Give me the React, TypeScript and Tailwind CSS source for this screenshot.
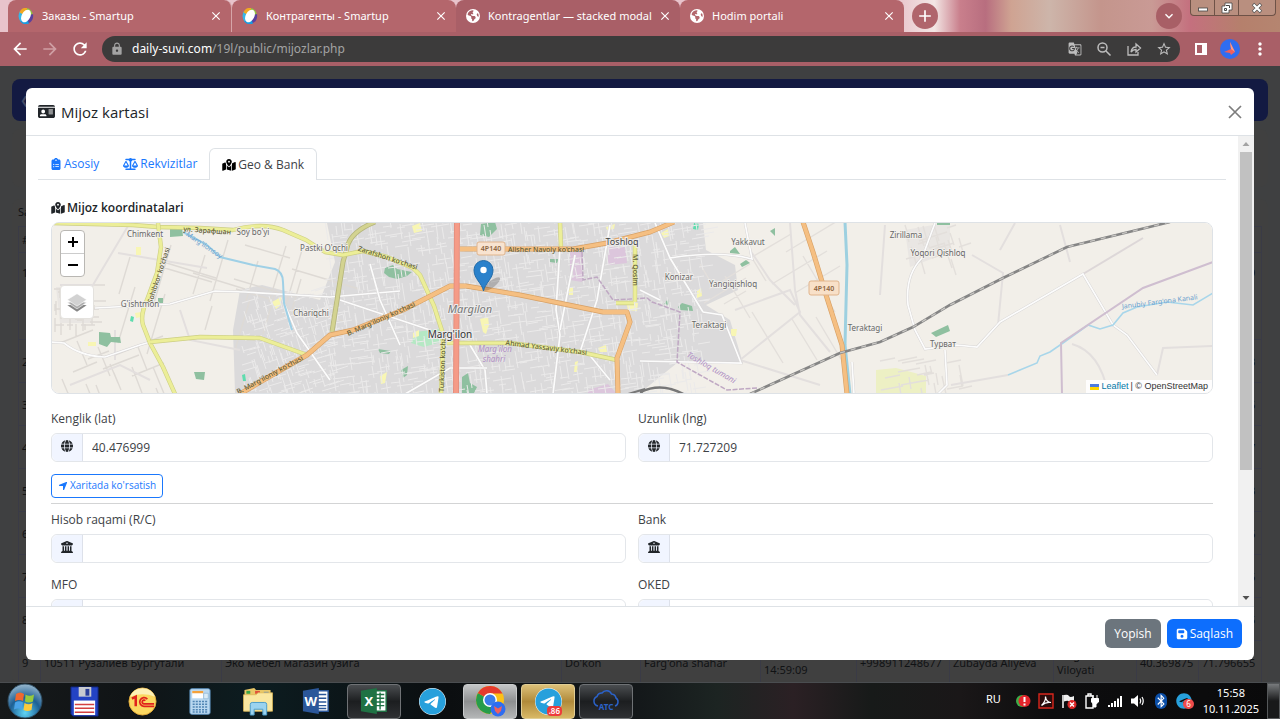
import React, { useId, useState } from "react";
import {
  FaBuildingColumns,
  FaClipboardList,
  FaFloppyDisk,
  FaGlobe,
  FaIdCard,
  FaLocationArrow,
  FaMapLocationDot,
  FaScaleBalanced,
  FaEarthAmericas,
  FaBluetoothB,
  FaTelegram,
} from "react-icons/fa6";
import {
  MdArrowBack,
  MdArrowForward,
  MdClose,
  MdGTranslate,
  MdLock,
  MdMoreVert,
  MdRefresh,
  MdStarBorder,
  MdAdd,
  MdKeyboardArrowDown,
} from "react-icons/md";

/* ---------- Browser window ---------- */

function SmartupIcon() {
  return (
    <svg viewBox="0 0 16 16" className="size-4 shrink-0" aria-hidden="true">
      <path d="M8 0a7 8 0 0 1 7 7L8 8z" fill="#8cc63f" />
      <path d="M15 6a7 8 0 0 1-5 9.600L8 8z" fill="#5b3f9e" />
      <path d="M11 15.500A7 8 0 0 1 2 13L8 8z" fill="#1b9ce0" />
      <path d="M2.500 13.500A7 8 0 0 1 2 3l6 5z" fill="#35b6e8" />
      <path d="M1.500 4.500A7 8 0 0 1 9 0L8 8z" fill="#f2a922" />
      <ellipse cx="8" cy="8" rx="4.300" ry="6.800" transform="rotate(28 8 8)" fill="#fff" />
    </svg>
  );
}

const browserTabs = [
  { title: "Заказы - Smartup", icon: "smartup", active: false },
  { title: "Контрагенты - Smartup", icon: "smartup", active: false },
  { title: "Kontragentlar — stacked modal (", icon: "globe", active: true },
  { title: "Hodim portali", icon: "globe", active: false },
];

function TabStrip() {
  return (
    <div className="flex h-8 shrink-0 items-stretch bg-[linear-gradient(90deg,#e8c3cb_0%,#e8c3cb_70%,#f3e6e4_73%,#c97f8c_75%,#b86e7f_77%,#cfa392_79%,#cdb5aa_82%,#c4958c_86%,#c99a95_90%,#c4707e_93%,#b5806c_97%,#b58570_100%)] pl-2">
      {browserTabs.map((tab, i) => (
        <div
          key={tab.title}
          className={`flex w-56 min-w-0 items-center gap-2 rounded-t-lg pr-2 pl-2.5 text-white ${
            tab.active ? "bg-[#a95f67]" : "bg-[#b4666c]"
          } ${i === 0 ? "border-r border-[#d6a5a8]" : ""}`}
        >
          {tab.icon === "smartup" ? <SmartupIcon /> : <FaEarthAmericas className="size-3.5 shrink-0" />}
          <span className="min-w-0 flex-1 overflow-hidden text-[11px] whitespace-nowrap">{tab.title}</span>
          <button aria-label="Закрыть вкладку" className="-ml-1 shrink-0">
            <MdClose className="size-3.5" />
          </button>
        </div>
      ))}
      <button aria-label="Новая вкладка" className="ml-2 grid size-[26px] place-items-center self-center rounded-full bg-[#b0656c] text-white">
        <MdAdd className="size-5" />
      </button>
      <button aria-label="Поиск вкладок" className="mr-2 ml-auto grid size-[26px] place-items-center self-center rounded-full bg-[#a85f66] text-white">
        <MdKeyboardArrowDown className="size-4" />
      </button>
      <div className="mr-1 flex h-4 self-start rounded-b border border-t-0 border-[#6e5247] bg-[#b98f7f] text-white">
        <button aria-label="Свернуть" className="grid w-6 place-items-center border-r border-[#6e5247]">
          <svg viewBox="0 0 12 12" className="size-3"><rect x="1.500" y="6" width="9" height="3" fill="#fff" stroke="#444" strokeWidth=".8" /></svg>
        </button>
        <button aria-label="Восстановить" className="grid w-6 place-items-center border-r border-[#6e5247]">
          <svg viewBox="0 0 12 12" className="size-3"><path d="M4 1h7v7H8v3H1V4h3z" fill="#fff" stroke="#444" strokeWidth=".8" /><path d="M3.500 6.500h2v2h-2zM5 3.500h3.500V6" fill="none" stroke="#444" /></svg>
        </button>
        <button aria-label="Закрыть" className="grid w-9 place-items-center">
          <svg viewBox="0 0 12 12" className="size-3"><path d="M2 2l8 8M10 2l-8 8" stroke="#555" strokeWidth="3.400" /><path d="M2.500 2.500l7 7M9.500 2.500l-7 7" stroke="#fff" strokeWidth="2.200" /></svg>
        </button>
      </div>
    </div>
  );
}

function AddressBar() {
  return (
    <div className="flex h-[34px] shrink-0 items-center bg-[#a95f67] px-2.5 text-white">
      <button aria-label="Назад"><MdArrowBack className="size-5" /></button>
      <button aria-label="Вперёд" className="ml-2.5 text-[#cf9fa4]"><MdArrowForward className="size-5" /></button>
      <button aria-label="Обновить" className="ml-2.5"><MdRefresh className="size-5" /></button>
      <div className="ml-3 flex h-[26px] min-w-0 flex-1 items-center rounded-full bg-[#3c3b3b] px-2 text-[#a3a3a3]">
        <MdLock className="size-3.5" />
        <div className="ml-2 min-w-0 flex-1 truncate text-xs">
          <span className="text-white">daily-suvi.com</span>/19l/public/mijozlar.php
        </div>
        <div className="flex items-center gap-3.5 text-[#bdbdbd]">
          <button aria-label="Перевести"><MdGTranslate className="size-3.5" /></button>
          <button aria-label="Масштаб">
            <svg viewBox="0 0 16 16" className="size-4" fill="none" stroke="currentColor" strokeWidth="1.500"><circle cx="6.500" cy="6.500" r="4.500" /><path d="M10 10l4.500 4.500M4.500 6.500h4" /></svg>
          </button>
          <button aria-label="Поделиться">
            <svg viewBox="0 0 16 16" className="size-4" fill="none" stroke="currentColor" strokeWidth="1.300"><path d="M2 5v9h10v-3M5 11c.5-3.500 2-5 5-5V3l4.500 4L10 11V8.500C8 8.500 6.500 9 5 11z" /></svg>
          </button>
          <button aria-label="В закладки"><MdStarBorder className="size-4" /></button>
        </div>
      </div>
      <button aria-label="Боковая панель" className="ml-3.5">
        <svg viewBox="0 0 14 14" className="size-3.5"><path d="M1 1h12v12H1z" fill="#fff" /><path d="M3 3h5v8H3z" fill="#a95f67" /></svg>
      </button>
      <button aria-label="Профиль" className="ml-3">
        <svg viewBox="0 0 20 20" className="size-5"><circle cx="10" cy="10" r="10" fill="#2f6df0" /><path d="M10 3l1 7-7 3 6 1 1 2 4-3z" fill="#f0605c" /><path d="M10 3l1 7 4 3z" fill="#ff9a86" /></svg>
      </button>
      <button aria-label="Меню" className="ml-2.5"><MdMoreVert className="size-5" /></button>
    </div>
  );
}

/* ---------- Customer list behind the dialog ---------- */

const rows = [
  { n: 1, lng: "71.784219" },
  { n: 2, lng: "71.784213" },
  { n: 3, lng: "71.784216" },
  { n: 4, lng: "71.784217" },
  { n: 5, lng: "71.784213" },
  { n: 6, lng: "71.784216" },
  { n: 7, lng: "71.784216" },
  { n: 8, lng: "71.784215" },
];

function CustomerList() {
  return (
    <div aria-hidden="true" className="h-full overflow-hidden bg-[#3f4041] px-3 pt-[13px] text-[11px] text-[#101214]">
      <div className="flex h-[42px] items-center rounded-lg bg-[#131a42] px-2 text-[#444a66]">❮</div>
      <div className="mt-2 h-[58px] rounded-lg bg-[#404040]" />
      <div className="mt-3 rounded-lg bg-[#404040] px-1.5">
        <p className="flex h-[27px] items-center">Sa</p>
        <table className="w-full table-fixed border-collapse [&_td]:border [&_td]:border-[#3a3b46] [&_td]:px-[3px] [&_td]:leading-[15px]">
          <colgroup>
            <col className="w-[22px]" />
            <col className="w-[181px]" />
            <col />
            <col className="w-[79px]" />
            <col className="w-[120px]" />
            <col className="w-[96px]" />
            <col className="w-[93px]" />
            <col className="w-[104px]" />
            <col className="w-[83px]" />
            <col className="w-[62px]" />
            <col className="w-[63px]" />
          </colgroup>
          <tbody>
            <tr className="h-[26px]">
              <td>#</td>
              {Array.from({ length: 10 }, (_, i) => <td key={i} />)}
            </tr>
            {rows.map((r) => (
              <tr key={r.n} className={r.n === 1 ? "h-[87px] align-top [&_td]:pt-3" : "h-[43px]"}>
                <td>{r.n}</td>
                {Array.from({ length: 9 }, (_, i) => <td key={i} />)}
                <td>{r.lng}</td>
              </tr>
            ))}
            <tr className="h-[43px] whitespace-nowrap">
              <td>9</td>
              <td>10511 Рузалиев Бургутали</td>
              <td>Эко мебел магазин узига</td>
              <td>Do'kon</td>
              <td>Farg'ona shahar</td>
              <td>2025-11-10<br />14:59:09</td>
              <td>+998911248677</td>
              <td>Zubayda Aliyeva</td>
              <td>Farg'ona<br />Viloyati</td>
              <td>40.369875</td>
              <td>71.796655</td>
            </tr>
          </tbody>
        </table>
      </div>
    </div>
  );
}

/* ---------- Map ---------- */

function makeRandom(seed: number) {
  let s = seed;
  return () => {
    s = (s * 16807) % 2147483647;
    return s / 2147483647;
  };
}

/* Minor streets: a loose lattice of short segments inside a box. */
function streets(seed: number, x0: number, y0: number, x1: number, y1: number, step: number, tilt: number) {
  const rnd = makeRandom(seed);
  let d = "";
  for (let x = x0; x < x1; x += step) {
    for (let y = y0; y < y1; y += step) {
      const px = Math.round(x + rnd() * step);
      const py = Math.round(y + rnd() * step);
      const len = Math.round(step * (0.8 + rnd() * 1.6));
      const slope = Math.round(len * tilt);
      d += rnd() > 0.45 ? `M${px} ${py}l${slope} ${len}` : `M${px} ${py}l${len} ${-slope}`;
    }
  }
  return d;
}

const cityStreets = streets(41, 325, 218, 700, 392, 8, 0.15) + streets(77, 242, 290, 330, 392, 7, 0.3);
const villageStreets =
  streets(5, 54, 285, 92, 325, 6, 0.02) + streets(9, 60, 340, 150, 390, 16, 0.4) + streets(15, 130, 230, 300, 300, 28, -0.3);
const eastStreets = streets(23, 905, 225, 955, 260, 9, 0.3) + streets(31, 880, 360, 960, 390, 10, 0.2) + streets(12, 700, 250, 800, 300, 24, 0.6);

const YELLOW = [
  "M51 223L133 225L158 227L200 228L233 230Q262 222 283 230L306 240L325 252L343 255L363 251L387 257L413 268L420 275L434 306L443 334L443 343L441 394",
  "M158 223L161 247L157 273L147 300Q140 315 143 325L150 343L163 367L175 394",
  "M150 342Q160 341 200 337L260 338L307 355",
  "M447 343L510 343L580 352L617 360",
  "M560 222L561 248",
  "M635 240L635 302M616 303L634 303",
];
const OLIVE = ["M375 222Q350 232 347 248L343 262L332 332"];
const ORANGE = [
  "M240 394L267 378L307 355L330 335L353 330L403 310L450 286L466 286L520 295L603 312L627 312L630 322L617 358L618 394",
  "M460 249L573 249L607 243L650 232L674 222",
  "M803 222L813 252L827 298L842 345L847 394",
];
const WHITE = [
  "M95 308L170 304L215 291L245 292L330 297L400 291M51 342L64 343Q80 356 105 357L140 345L150 342",
  "M284 303L297 333L330 380M655 223L670 258L703 312M670 258Q720 250 752 259L745 223M703 312L722 315L730 335L741 363L640 361",
  "M560 248L556 310L560 335L553 394M610 225L597 300L580 352M470 345L485 370L487 394",
  "M575 255L560 330M587 352L610 380",
  "M935 223L922 258Q905 275 908 305L915 330L925 349L957 345L977 347L1000 322L1083 274L1113 325L1127 335L1157 375",
  "M660 300L640 290M945 350L947 385L938 394M852 362L854 394M405 394L450 368L487 368M370 264L380 300L400 345M340 300L430 330",
];
const RAIL = "M750 394L840 353L880 342L913 327L950 305L1003 278L1067 247L1170 222";

const PLACES: { t: string; x: number; y: number }[] = [
  { t: "Chimkent", x: 145, y: 237 },
  { t: "Soy bo'yi", x: 253, y: 235 },
  { t: "Pastki O'qchi", x: 324, y: 251 },
  { t: "G'ishtmon", x: 140, y: 307 },
  { t: "Chariqchi", x: 311, y: 316 },
  { t: "Yakkavut", x: 748, y: 245 },
  { t: "Konizar", x: 679, y: 280 },
  { t: "Yangiqishloq", x: 733, y: 287 },
  { t: "Teraktagi", x: 709, y: 328 },
  { t: "Teraktagi", x: 865, y: 331 },
  { t: "Zirillama", x: 906, y: 238 },
  { t: "Yoqori Qishloq", x: 938, y: 256 },
  { t: "Турват", x: 943, y: 347 },
];

const GREENS = [
  "M170 228l12-1 1 9-13 1z", "M99 332l11 1 1 4 9 0 1 6-10-1-4 5-8-3z", "M194 372h11l-1 8-8-1z", "M158 298h5v5h-5z",
  "M481 224l14-2 2 7-8 8-9-2z", "M385 268l8-3 4 4 15 3-5 4-10 3-8-2-5-4z", "M378 349l13 2-2 3-9-1z",
  "M401 370l7-4-1 9-4 3z", "M462 377l6-4 2 10 7 4-3 6h-12z", "M550 259l9 0-2 4-7-1z", "M730 251l5-4 5 7-10-1z", "M740 264l6-4 4 3-8 4z",
  "M678 307l4-4 10 3 1 5-13-1z", "M931 333l17-8 2 6-14 6z", "M770 231l5-3 0 8z", "M664 304l4-5 1 6z", "M937 222h13v3h-13z",
];
const LIGHT_YELLOWS = [
  "M412 226l8-3 2 8-8 2z", "M480 319l8-2 1 8-3 9-3-2z", "M380 376l7-4-2 11-4 1z", "M598 348l8-3 1 7-7 0z", "M606 227l9-3-1 5-7 1z",
  "M661 233l7-4 1 7-5 2z", "M697 291l4-3 1 8-5 2z", "M731 329l6 0-1 7-5 0z", "M272 302l9-5 0 8-5 4z", "M136 247h5v8h-5z", "M88 342h8v4h-8z",
  "M575 362l3-1-1 11-3 0z", "M525 294l10 1v4l-9-1z", "M569 287h4v8h-4z", "M135 313l6-1 0 5-5 1z", "M413 333l6-3 0 6-6 2z", "M626 301l12 2-1 8-9-1z",
];

function MapCanvas() {
  return (
    <svg
      viewBox="51 223 1162 170"
      preserveAspectRatio="xMidYMid slice"
      className="absolute inset-0 size-full font-['Noto_Sans',sans-serif]"
      role="img"
      aria-label="Xarita"
    >
      <rect x="0" y="150" width="1300" height="300" fill="#f2efe9" />
      <path d="M327 223H703L706 250L735 265L738 290L706 305L730 320L743 363H677L640 393H235L233 330L240 290L262 285L320 300L335 262Z" fill="#dbdadb" />
      <path d="M56 287h35v36H60zM905 230l45-8 0 30-40 15z" fill="#e9e6e3" />
      <path d="M876 370l20-2 30 8 0 17h-50z" fill="#edf0c4" />
      <path d="M570 252h12l0 30-12-2zM608 247l17 0 2 16-19 2zM588 390l20-6 8 9h-28z" fill="#dcc6dc" />
      <path d="M415 332l24-3 5 12-20 6-13-4z" fill="#b5e8c4" />
      <path d={villageStreets} stroke="#dedad5" strokeWidth="1.400" fill="none" />
      <path d={eastStreets} stroke="#e3dfdb" strokeWidth="1.400" fill="none" />
      <path d="M90 290L128 226M118 253L207 268M60 285H92M70 385L120 365L150 380M115 330V360M180 310L190 340L240 350M790 223L795 290L800 315L830 352M735 310L790 290L800 312L740 360L820 385M880 295L885 225M972 255L1003 273L998 325M1060 225L1070 262M1000 250L1015 223M1072 344Q1100 352 1108 393M1157 375L1163 348L1213 346M951 385L1008 375M750 250L770 280L795 305" stroke="#e3dfde" strokeWidth="2" fill="none" />
      <path d="M1083 274L1143 238" stroke="#ddd7d8" strokeWidth="2" fill="none" />
      {LIGHT_YELLOWS.map((d) => <path key={d} d={d} fill="#f8f6b4" />)}
      {GREENS.map((d) => <path key={d} d={d} fill="#8fc0a0" />)}
      <path d="M131 316l3 1-1 5-3-1zM694 223l5 1-1 6-5-1zM242 375l3-1 1 7-3 0z" fill="#5fdcae" />
      <path d={cityStreets} stroke="#ebeaea" strokeWidth="1" fill="none" />
      {WHITE.map((d) => (
        <g key={d} fill="none">
          <path d={d} stroke="#d6d4d4" strokeWidth="2.600" />
          <path d={d} stroke="#fcfcfc" strokeWidth="1.700" />
        </g>
      ))}
      <path d="M183 232L207 245L220 257L253 265L275 269Q283 272 283 282L284 303L292 330" stroke="#9fd0e6" strokeWidth="2" fill="none" />
      <path d="M845 222L847 265L845 345L850 394" stroke="#9dd0e0" strokeWidth="3" fill="none" />
      <path d="M1008 375L1037 363L1040 356L1050 352L1063 343L1088 325L1100 329L1113 325L1123 313L1137 307L1167 302L1193 305L1213 293" stroke="#a8d6ea" strokeWidth="1.600" fill="none" />
      <path d="M582 252L583 280L597 277L613 300L647 298L652 302L680 312L677 362L700 375L727 390L757 388" stroke="#bfa8c3" strokeWidth="1.500" strokeDasharray="5 1.500" fill="none" />
      <path d="M1062 394L1061 343L1143 288L1213 262" stroke="#cfbed0" strokeWidth="2" fill="none" />
      {OLIVE.map((d) => (
        <g key={d} fill="none" strokeLinejoin="round">
          <path d={d} stroke="#b5b57c" strokeWidth="5" />
          <path d={d} stroke="#d3d391" strokeWidth="3.400" />
        </g>
      ))}
      {YELLOW.map((d) => (
        <g key={d} fill="none" strokeLinejoin="round">
          <path d={d} stroke="#cdcf84" strokeWidth="4.400" />
          <path d={d} stroke="#ecee98" strokeWidth="3.200" />
        </g>
      ))}
      {ORANGE.map((d) => (
        <g key={d} fill="none" strokeLinejoin="round">
          <path d={d} stroke="#d7a065" strokeWidth="5" />
          <path d={d} stroke="#f5bf82" strokeWidth="3.800" />
        </g>
      ))}
      <path d="M457 222L456 394" stroke="#e58f7f" strokeWidth="6" />
      <path d="M457 222L456 394" stroke="#f59b87" strokeWidth="4" />
      <path d={RAIL} stroke="#858585" strokeWidth="2.600" fill="none" />
      <path d={RAIL} stroke="#c9c7c4" strokeWidth="1.300" strokeDasharray="5 6" fill="none" />
      <path d="M640 392Q662 382 683 394" stroke="#777" strokeWidth="2.600" fill="none" />
      <path d="M628 394L645 389L640 394" stroke="#777" strokeWidth="2" fill="none" />

      <g fontSize="7" fontWeight="500" fill="#5f5d38" textAnchor="middle">
        <text x="207" y="233" transform="rotate(4 207 233)">ул. Зарафшан</text>
        <text x="161" y="276" transform="rotate(-72 161 276)">Sohibkor ko'chasi</text>
        <text x="387" y="260" transform="rotate(18 387 260)">Zarafshon ko'chasi</text>
        <text x="271" y="377" transform="rotate(-28 271 377)">B. Marg'iloniy ko'chasi</text>
        <text x="382" y="321" transform="rotate(-24 382 321)">B. Marg'iloniy ko'chasi</text>
        <text x="508" y="252" textAnchor="start">Alisher Navoiy ko'chasi</text>
        <text x="546" y="350" transform="rotate(7 546 350)">Ahmad Yassaviy ko'chasi</text>
        <text x="445" y="362" transform="rotate(-88 445 362)">Turkiston ko'chasi</text>
        <text x="633" y="270" transform="rotate(90 633 270)">M. Qosim</text>
      </g>
      <g fontSize="7" fill="#6c9fce" textAnchor="middle">
        <text x="203" y="247" transform="rotate(34 203 247)">Marg'ilonsoy</text>
        <text x="1160" y="304" transform="rotate(-7 1160 304)">Janubiy Farg'ona Kanali</text>
      </g>
      <g fontSize="8" fontStyle="italic" fill="#b08fc4" textAnchor="middle">
        <text x="495" y="352">Marg'ilon</text>
        <text x="494" y="362">shahri</text>
        <text x="710" y="370" transform="rotate(30 710 370)">Toshloq tumani</text>
      </g>
      <g fontSize="8" fill="#666" stroke="#f4f2ee" strokeWidth="1.600" paintOrder="stroke" textAnchor="middle">
        {PLACES.map((p) => <text key={p.t + p.x} x={p.x} y={p.y}>{p.t}</text>)}
      </g>
      <g stroke="#ececec" strokeWidth="2" paintOrder="stroke" textAnchor="middle">
        <text x="622" y="245" fontSize="9" fill="#444">Toshloq</text>
        <text x="470" y="313" fontSize="11" fontStyle="italic" fill="#777">Margilon</text>
        <text x="450" y="338" fontSize="10" fill="#333">Marg'ilon</text>
      </g>
      <g fontSize="7" fontWeight="600" fill="#8a6340" textAnchor="middle">
        <rect x="477" y="242" width="28" height="13" rx="2" fill="#f8e3d0" stroke="#e0b48c" />
        <text x="491" y="251">4P140</text>
        <rect x="809" y="281" width="30" height="14" rx="2" fill="#f8e0c8" stroke="#e0b48c" />
        <text x="824" y="291">4P140</text>
      </g>

      <ellipse cx="492" cy="284" rx="10" ry="3.500" transform="rotate(-38 492 284)" fill="#000" opacity=".2" />
      <path d="M483.500 291C482 283 474 279 474 270a9.500 9.500 0 0 1 19 0c0 9-8 13-9.500 21z" fill="#2a81cb" stroke="#226ba8" />
      <circle cx="483.500" cy="270" r="3.200" fill="#fff" />
    </svg>
  );
}

function CustomerMap() {
  return (
    <div className="relative h-[172px] overflow-hidden rounded-lg border border-[#dee2e6]">
      <MapCanvas />
      <div className="absolute top-[7px] left-2 flex flex-col gap-2">
        <div className="flex w-[25px] flex-col rounded-sm border border-[#b9b7b3] bg-white text-black">
          <button aria-label="Yaqinlashtirish" className="grid h-[23px] place-items-center border-b border-[#ccc]">
            <svg viewBox="0 0 10 10" className="size-2.5"><path d="M5 0v10M0 5h10" stroke="#000" strokeWidth="2" /></svg>
          </button>
          <button aria-label="Uzoqlashtirish" className="grid h-[22px] place-items-center">
            <svg viewBox="0 0 10 10" className="size-2.5"><path d="M0 5h10" stroke="#000" strokeWidth="2" /></svg>
          </button>
        </div>
        <button aria-label="Qatlamlar" className="grid size-[34px] place-items-center rounded border border-[#e4e2de] bg-white">
          <svg viewBox="0 0 26 26" className="size-6">
            <path d="M13 15.500L2.500 16.500 13 23.500l10.500-7z" fill="#868686" />
            <path d="M13 12L2.500 13.500 13 20.500l10.500-7z" fill="#adadad" stroke="#fff" strokeWidth=".6" />
            <path d="M13 4L2.500 10.500 13 17.500l10.500-7z" fill="#d2d2d2" stroke="#fff" strokeWidth=".6" />
          </svg>
        </button>
      </div>
      <div className="absolute right-0 bottom-0 flex items-center bg-white/90 px-1 font-['Liberation_Sans',sans-serif] text-[9px] leading-[13px] text-[#333]">
        <svg viewBox="0 0 9 6" className="mr-0.5 h-1.5 w-[9px]"><path d="M0 0h9v3H0z" fill="#4C7BE1" /><path d="M0 3h9v3H0z" fill="#FFD500" /></svg>
        <a href="#leaflet" className="mr-0.5 text-[#0078a8]">Leaflet</a>| © OpenStreetMap
      </div>
    </div>
  );
}

/* ---------- Dialog ---------- */

function Field({ label, icon, value = "" }: { label: string; icon: React.ReactNode; value?: string }) {
  const id = useId();
  const [text, setText] = useState(value);
  return (
    <div className="min-w-0">
      <label htmlFor={id} className="mb-1.5 block leading-4">{label}</label>
      <div className="flex h-[29px] rounded-md border border-[#e3e6ea]">
        <span className="flex w-[31px] items-center justify-center rounded-l-md border-r border-[#dde1ea] bg-[#f1f5ff] pb-1 text-[#212529]">{icon}</span>
        <input id={id} value={text} onChange={(e) => setText(e.target.value)} className="min-w-0 flex-1 rounded-r-md bg-white px-[9px] outline-none" />
      </div>
    </div>
  );
}

function DialogScrollbar() {
  return (
    <div aria-hidden="true" className="flex w-4 shrink-0 flex-col items-center bg-[#f1f1f1]">
      <svg viewBox="0 0 16 16" className="size-4"><path d="M4.500 10h7L8 6z" fill="#a3a3a3" /></svg>
      <div className="w-3 flex-[319] bg-[#c1c1c1]" />
      <div className="flex-[120]" />
      <svg viewBox="0 0 16 16" className="size-4"><path d="M4.500 6h7L8 10z" fill="#505050" /></svg>
    </div>
  );
}

const faIcon = "size-3 shrink-0";

function CustomerDialog() {
  return (
    <section role="dialog" aria-modal="true" aria-labelledby="dialog-title" className="flex h-full flex-col overflow-hidden rounded-md bg-white font-['Open_Sans','Noto_Sans',sans-serif] text-xs text-[#3d4246]">
      <header className="flex h-12 shrink-0 items-center justify-between border-b border-[#dee2e6] px-3">
        <h1 id="dialog-title" className="flex items-center gap-1.5 text-[15px] text-[#212529]">
          <FaIdCard className="size-[17px]" />
          Mijoz kartasi
        </h1>
        <button aria-label="Yopish" className="text-[#7d7d7d]">
          <svg viewBox="0 0 14 14" className="size-3.5"><path d="M1 1l12 12M13 1L1 13" stroke="currentColor" strokeWidth="1.700" /></svg>
        </button>
      </header>

      <div className="flex min-h-0 flex-1">
        <div className="min-w-0 flex-1 overflow-hidden px-3 pt-3">
          <div role="tablist" className="flex h-8 border-b border-[#dee2e6] text-[#1a78fd]">
            <button role="tab" className="flex items-center gap-0.5 px-3 pt-px"><FaClipboardList className={faIcon} />Asosiy</button>
            <button role="tab" className="flex items-center gap-0.5 px-3 pt-px"><FaScaleBalanced className="h-3 w-[15px] shrink-0" />Rekvizitlar</button>
            <button role="tab" aria-selected="true" className="-mb-px flex items-center gap-0.5 rounded-t-md border border-b-0 border-[#dee2e6] bg-white px-3 text-[#3d4246]">
              <FaMapLocationDot className="h-3 w-3.5 shrink-0 text-black" />Geo &amp; Bank
            </button>
          </div>

          <div className="px-[13px] pt-[19px]">
            <h2 className="mb-1.5 flex items-center gap-0.5 leading-[17px] font-semibold text-[#212529]"><FaMapLocationDot className="h-3 w-3.5 shrink-0" />Mijoz koordinatalari</h2>
            <CustomerMap />
            <div className="mt-[17px] grid grid-cols-2 gap-x-3">
              <Field label="Kenglik (lat)" icon={<FaGlobe className={faIcon} />} value="40.476999" />
              <Field label="Uzunlik (lng)" icon={<FaGlobe className={faIcon} />} value="71.727209" />
            </div>
            <button className="mt-3 flex h-6 items-center gap-0.5 rounded border border-[#1a78fd] px-1.5 text-[10px] text-[#1a78fd]">
              <FaLocationArrow className="size-2.5" />Xaritada ko'rsatish
            </button>
            <hr className="mt-[5px] border-[#d3d4d5]" />
            <div className="mt-2 grid grid-cols-2 gap-x-3 gap-y-3.5">
              <Field label="Hisob raqami (R/C)" icon={<FaBuildingColumns className={faIcon} />} />
              <Field label="Bank" icon={<FaBuildingColumns className={faIcon} />} />
              <Field label="MFO" icon={<FaBuildingColumns className={faIcon} />} />
              <Field label="OKED" icon={<FaBuildingColumns className={faIcon} />} />
            </div>
          </div>
        </div>
        <DialogScrollbar />
      </div>

      <footer className="flex h-[54px] shrink-0 items-center justify-end gap-1.5 border-t border-[#dee2e6] px-3 text-white">
        <button className="h-[29px] rounded-md bg-[#6c757d] px-[9px]">Yopish</button>
        <button className="flex h-[29px] items-center gap-0.5 rounded-md bg-[#0d6efd] px-[9px]"><FaFloppyDisk className={faIcon} />Saqlash</button>
      </footer>
    </section>
  );
}

/* ---------- Taskbar ---------- */

const StartOrb = () => (
  <svg viewBox="0 0 36 36" className="size-9">
    <defs><radialGradient id="orb" cx=".5" cy=".85" r=".9"><stop offset="0" stopColor="#5fd4f5" /><stop offset=".5" stopColor="#1d5f94" /><stop offset="1" stopColor="#a9c4d6" /></radialGradient></defs>
    <circle cx="18" cy="18" r="17" fill="url(#orb)" stroke="#2c4b60" />
    <path d="M9 11q4-3 8 0l-1 7q-4-2-8 0z" fill="#f0682f" /><path d="M18.500 11.500q4 2.500 8.500 0l-1 7q-4 2-8 0z" fill="#96c93e" />
    <path d="M8 19.500q4-2.500 8 0l-1 7q-4-2-8 0z" fill="#4aa3e8" /><path d="M17.500 20q4 2.500 8 0l-1 7q-4 2-8 0z" fill="#fccb3c" />
  </svg>
);
const FloppyApp = () => (
  <svg viewBox="0 0 32 32" className="size-[31px]"><path d="M2 1h28v30H4l-2-2z" fill="#2343c4" stroke="#0f2680" /><path d="M10 1h13v10H10z" fill="#c8cbd0" /><path d="M17 3h4v7h-4z" fill="#2a3f9a" /><path d="M5 15h22v15H5z" fill="#fff" /><path d="M6 19h20M6 23h20M6 27h20" stroke="#d34040" strokeWidth="1.500" /></svg>
);
const OneCApp = () => (
  <svg viewBox="0 0 30 30" className="size-[29px]"><circle cx="15" cy="15" r="14" fill="#fbd861" stroke="#e0a93a" /><path d="M2 10a14 14 0 0 1 26 0q-13-5-26 0z" fill="#fdf0b5" /><path d="M4 12l4-2v10" fill="none" stroke="#e0221c" strokeWidth="2.600" /><path d="M20 12.500a4.500 4.500 0 1 0-3.500 7.500H27M18 14a2 2 0 1 0-1.500 3.500H27" fill="none" stroke="#e0221c" strokeWidth="1.800" /></svg>
);
const CalcApp = () => (
  <svg viewBox="0 0 24 30" className="h-[29px] w-[22px]"><rect x="1" y="1" width="22" height="28" rx="2" fill="#b9d8f0" stroke="#5a8fbd" /><path d="M3.500 3.500h12v8h-12z" fill="#fff" /><path d="M3.500 3.500h12v2.500h-12z" fill="#f3a13b" /><path d="M16 6h5v6h-5z" fill="#d9ecf8" stroke="#7ba7c9" strokeWidth=".6" /><path d="M4 15h16M4 18h16M4 21h16M4 24h16M4 26.500h16" stroke="#4f84b3" strokeWidth="1.800" strokeDasharray="2.200 1.200" /></svg>
);
const ExplorerApp = () => (
  <svg viewBox="0 0 32 30" className="h-[29px] w-8"><path d="M2 3l10-2 2 2h15v22H2z" fill="#e9c767" /><path d="M4 4h4v3H4z" fill="#3aa546" /><path d="M13 4h5v3h-5z" fill="#e1503a" /><path d="M22 5h5v2h-5z" fill="#4b87d0" /><path d="M1 8h13l2-2h15v19H1z" fill="#fae7a0" stroke="#d9b553" strokeWidth=".8" /><path d="M8 18q0-2 2-2h13q2 0 2 2v11h-4v-6h-9v6H8z" fill="#9bd3ef" stroke="#4b9cc9" /></svg>
);
const OfficeApp = ({ letter, kind }: { letter: string; kind: "word" | "excel" }) => {
  const color = kind === "word" ? "#2b579a" : "#1f7244";
  return (
    <svg viewBox="0 0 30 30" className="size-7">
      <path d="M15 4h13v22H15z" fill="#fff" stroke={color} strokeWidth="1.500" />
      {kind === "word" ? <path d="M17 8h9M17 12h9M17 16h9M17 20h9M17 23h9" stroke={color} strokeWidth="1.500" /> : <path d="M17 8h9M17 12h9M17 16h9M17 20h9M21.500 6v18" stroke={color} strokeWidth="1.500" />}
      <path d="M1 4l17-3v28L1 26z" fill={color} />
      <text x="9.500" y="20" textAnchor="middle" fontSize="14" fontWeight="700" fill="#fff">{letter}</text>
    </svg>
  );
};
const ChromeApp = () => (
  <svg viewBox="0 0 32 32" className="size-8"><circle cx="16" cy="15" r="14" fill="#fbc116" /><path d="M16 15L3.900 8A14 14 0 0 0 16 29l6-10.500z" fill="#269c4b" /><path d="M16 15L3.900 8A14 14 0 0 1 28.500 8.500H16z" fill="#e53a2e" /><circle cx="16" cy="15" r="7" fill="#fff" /><circle cx="16" cy="15" r="5.500" fill="#3b7de9" /><circle cx="24" cy="24" r="7.500" fill="#2f6df0" /><path d="M20 21l4 2.500 4-2.500-1 5-3 3-3-3z" fill="#f0605c" /></svg>
);
const AtcApp = () => (
  <svg viewBox="0 0 30 28" className="h-7 w-[30px]"><path d="M7 19a5 5 0 0 1-1-9.500A5 5 0 0 1 11 6a5.500 5.500 0 0 1 9.500 1A5 5 0 0 1 25 11a4.500 4.500 0 0 1-1 8" fill="none" stroke="#2b62c9" strokeWidth="1.500" /><text x="15" y="23" textAnchor="middle" fontSize="8" fontWeight="700" fill="#2b62c9">ATC</text></svg>
);
const TelegramApp = () => (
  <span className="grid size-[27px] place-items-center rounded-full bg-white"><FaTelegram className="size-[27px] text-[#27a0dc]" /></span>
);

function TaskButton({ label, look = "plain", children }: { label: string; look?: "plain" | "open" | "lit" | "gold"; children: React.ReactNode }) {
  const looks = {
    plain: "border-transparent",
    open: "border-[#6f7275] bg-[linear-gradient(180deg,#4a4d50,#1c1e20_50%,#2e3033)]",
    lit: "border-[#c9cbcc] bg-[linear-gradient(180deg,#c4c6c7,#8d8f90_50%,#b4b6b7)]",
    gold: "border-[#e0cd94] bg-[linear-gradient(180deg,#dcc078,#b08a3a_50%,#d8b866)]",
  };
  return (
    <button aria-label={label} className={`relative grid h-[35px] w-[54px] place-items-center rounded-sm border ${looks[look]}`}>
      {children}
    </button>
  );
}

function Taskbar() {
  return (
    <nav className="flex h-[37px] shrink-0 items-center border-t border-[#4a4d50] bg-[linear-gradient(90deg,#16191a_0%,#101416_10%,#0c1c20_20%,#0b0e10_35%,#14181a_50%,#1c2422_56%,#2b2024_62%,#171a19_68%,#1a1718_75%,#0d0d0e_82%,#0a0a0b_100%)] text-white">
      <button aria-label="Пуск" className="ml-[7px]"><StartOrb /></button>
      <div className="ml-3.5 flex gap-1">
        <TaskButton label="Total Commander"><FloppyApp /></TaskButton>
        <TaskButton label="1C"><OneCApp /></TaskButton>
        <TaskButton label="Калькулятор"><CalcApp /></TaskButton>
        <TaskButton label="Проводник"><ExplorerApp /></TaskButton>
        <TaskButton label="Word"><OfficeApp letter="W" kind="word" /></TaskButton>
        <TaskButton label="Excel" look="open"><OfficeApp letter="X" kind="excel" /></TaskButton>
        <TaskButton label="Telegram"><TelegramApp /></TaskButton>
        <TaskButton label="Chrome" look="lit"><ChromeApp /></TaskButton>
        <TaskButton label="Telegram" look="gold">
          <TelegramApp />
          <span className="absolute right-3 bottom-0.5 rounded-sm bg-[#ee3b3b] px-0.5 text-[8px] leading-[10px] font-semibold">.86</span>
        </TaskButton>
        <TaskButton label="ATC" look="open"><AtcApp /></TaskButton>
      </div>
      <span className="mr-3.5 mb-1 ml-auto text-[11px]">RU</span>
      <div className="flex items-center gap-[7px]">
        <svg viewBox="0 0 16 16" className="size-4"><circle cx="7" cy="8" r="6" fill="#3fae49" /><circle cx="9.500" cy="8" r="6" fill="#e3242b" /><path d="M9.500 4v5M9.500 10.500v2" stroke="#fff" strokeWidth="2" /></svg>
        <svg viewBox="0 0 16 16" className="size-4"><path d="M1 1h14v14H1z" fill="#2a0c0c" stroke="#d8261c" strokeWidth="1.400" /><path d="M3.500 12.500Q8 8 7.500 3.500 8 9 13 9.500 8 8.500 3.500 12.500z" fill="none" stroke="#fff" strokeWidth="1.200" /></svg>
        <svg viewBox="0 0 16 16" className="size-4"><path d="M2 2v13" stroke="#fff" strokeWidth="1.500" /><path d="M3 2q4-1 5 1t5 0v6q-4 1-5-.5T3 8.500z" fill="#eee" /><circle cx="11" cy="11.500" r="4.500" fill="#dc2626" /><path d="M9 9.500l4 4M13 9.500l-4 4" stroke="#fff" strokeWidth="1.400" /></svg>
        <svg viewBox="0 0 16 16" className="size-4"><path d="M2 3h7v12H2zM4 1h3v2H4z" fill="none" stroke="#fff" strokeWidth="1.400" /><path d="M9 2v4M13 2v4M7.500 5.500h7V9L12 11v3H9.500v-3L7.500 9z" fill="#fff" stroke="#fff" /></svg>
        <svg viewBox="0 0 16 16" className="size-4" fill="#fff"><path d="M1 12h2v2H1zM4 10h2v4H4zM7 8h2v6H7zM10 5.500h2V14h-2zM13 3h2v11h-2z" /></svg>
        <svg viewBox="0 0 16 16" className="size-4"><path d="M1 5.500h3L8 2v12l-4-3.500H1z" fill="#fff" /><path d="M10 5.500q1.500 2.500 0 5M12 4q2.500 4 0 8" fill="none" stroke="#fff" strokeWidth="1.200" /></svg>
        <span className="grid size-4 place-items-center"><FaBluetoothB className="h-4 w-3 rounded-full bg-[#0b4fa8] p-px" /></span>
        <span className="relative"><FaTelegram className="size-4 text-[#27a0dc]" /><span className="absolute -right-0.5 bottom-0 rounded-full bg-[#ee4b4b] px-[3px] text-[8px] leading-[10px]">6</span></span>
      </div>
      <time className="mr-2 ml-[11px] text-center text-[11px] leading-[16px]">15:58<br />10.11.2025</time>
      <button aria-label="Свернуть все окна" className="h-full w-[13px] border border-[#55585a] bg-[linear-gradient(180deg,#777a7c,#18191a_50%)]" />
    </nav>
  );
}

export default function App() {
  return (
    <div className="flex h-screen flex-col overflow-hidden font-['Noto_Sans','Open_Sans',sans-serif]">
      <TabStrip />
      <AddressBar />
      <main className="relative min-h-0 flex-1">
        <CustomerList />
        <div className="absolute inset-0 px-[26px] py-[22px]">
          <CustomerDialog />
        </div>
      </main>
      <Taskbar />
    </div>
  );
}
